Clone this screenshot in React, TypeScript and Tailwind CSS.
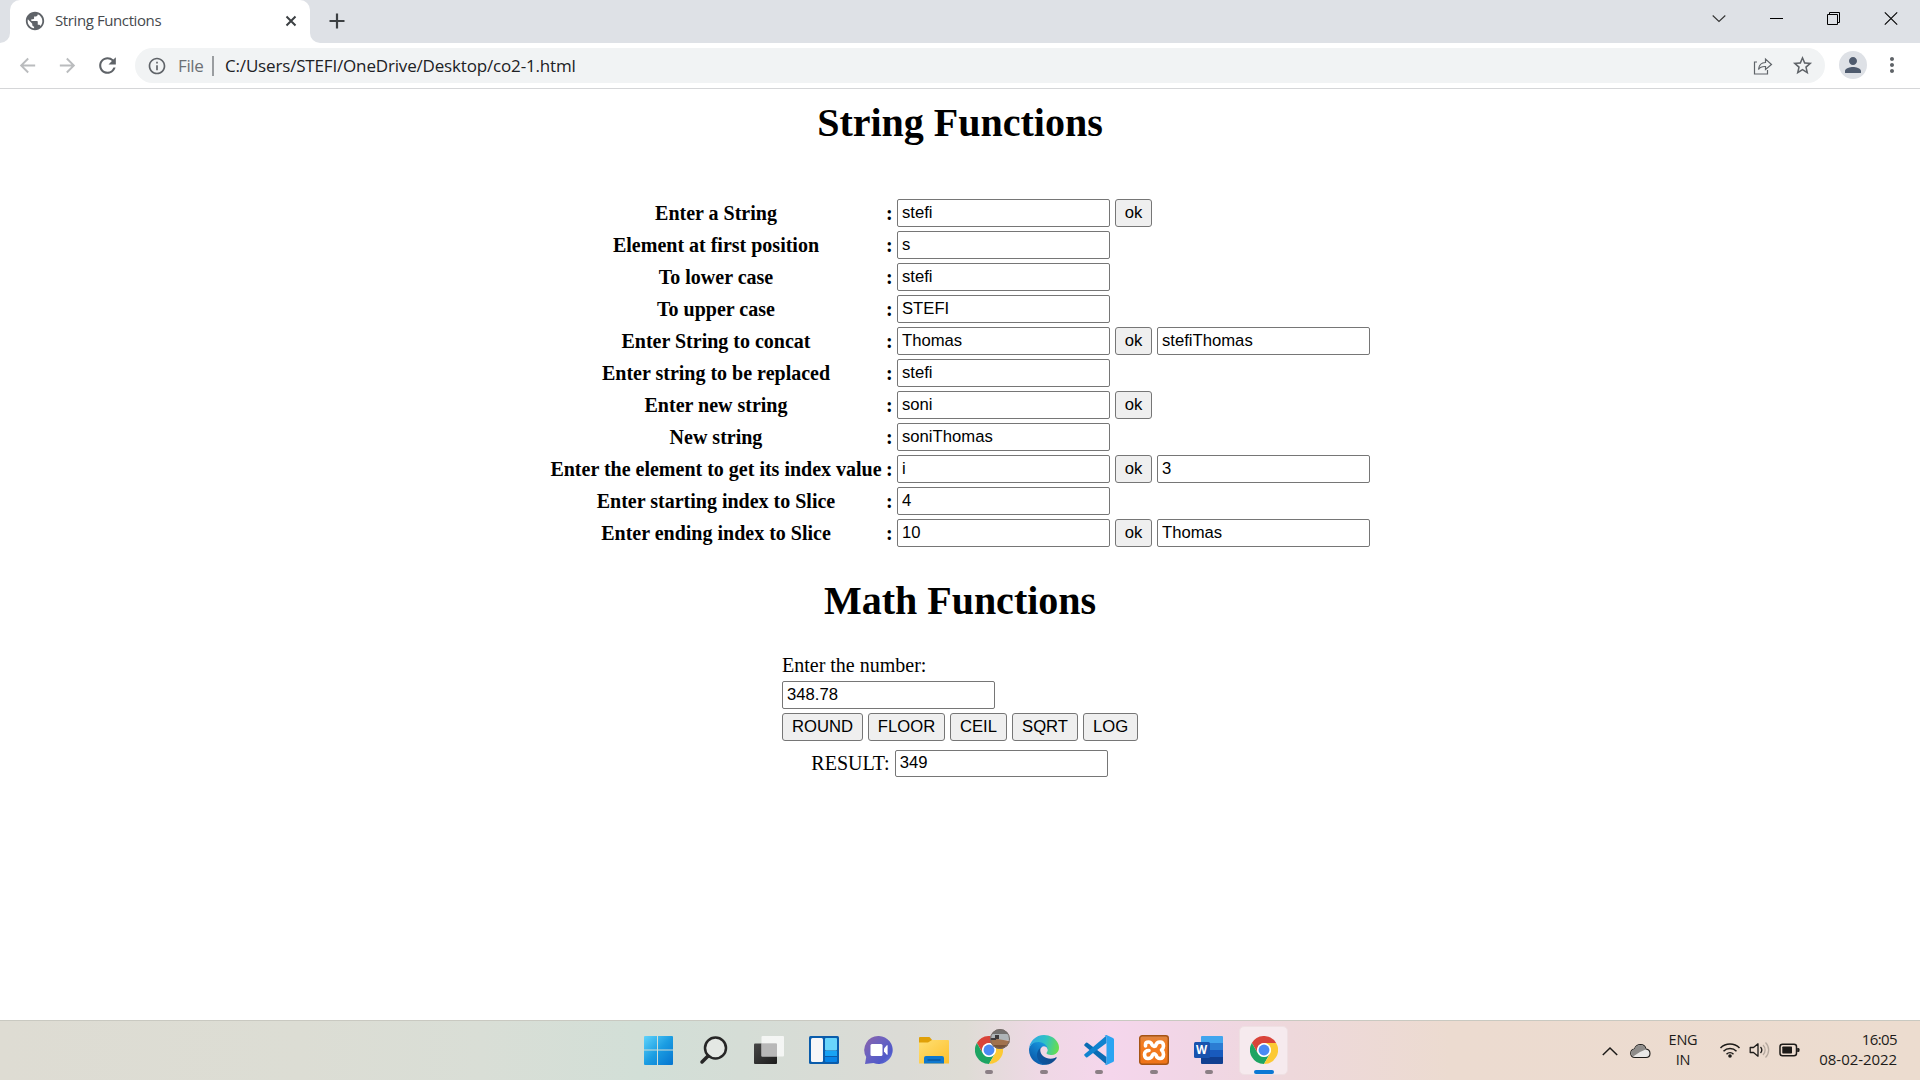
import React from "react";
import {
  MdArrowBack,
  MdArrowForward,
  MdMoreVert,
  MdOutlineInfo,
  MdPerson,
  MdPublic,
  MdRefresh,
  MdStarBorder,
} from "react-icons/md";

type Row = { label: string; value: string; ok?: boolean; result?: string };

const rows: Row[] = [
  { label: "Enter a String", value: "stefi", ok: true },
  { label: "Element at first position", value: "s" },
  { label: "To lower case", value: "stefi" },
  { label: "To upper case", value: "STEFI" },
  { label: "Enter String to concat", value: "Thomas", ok: true, result: "stefiThomas" },
  { label: "Enter string to be replaced", value: "stefi" },
  { label: "Enter new string", value: "soni", ok: true },
  { label: "New string", value: "soniThomas" },
  { label: "Enter the element to get its index value", value: "i", ok: true, result: "3" },
  { label: "Enter starting index to Slice", value: "4" },
  { label: "Enter ending index to Slice", value: "10", ok: true, result: "Thomas" },
];

function Field({ value, short }: { value: string; short?: boolean }) {
  return (
    <input
      type="text"
      defaultValue={value}
      className={`${short ? "h-[27px] pb-[2px]" : "h-7 pb-px"} w-[213px] shrink-0 rounded-[2px] border border-[#767676] bg-white pt-0 pr-1 pl-1 font-['Liberation_Sans',sans-serif] text-[16.67px] leading-5 text-black outline-none`}
    />
  );
}

function Push({ label, width }: { label: string; width: string }) {
  return (
    <button
      type="button"
      className={`${width} h-7 shrink-0 rounded-[3px] border border-[#767676] bg-[#efefef] pb-px text-center font-['Liberation_Sans',sans-serif] text-[16.67px] leading-[25px] text-black`}
    >
      {label}
    </button>
  );
}

function TabStrip() {
  return (
    <div className="flex h-[43px] bg-[#dee1e6]">
      <div className="flex w-[10px] items-end bg-white">
        <div className="h-full w-full rounded-br-[10px] bg-[#dee1e6]" />
      </div>
      <div className="bg-[#dee1e6]">
        <div className="flex h-full w-[300px] items-center rounded-t-[10px] bg-white pr-[11px] pl-[14px]">
          <MdPublic className="mb-px size-[22px] text-[#5f6368]" />
          <span className="mb-[3px] ml-[9px] text-[15px] leading-5 tracking-[-0.4px] whitespace-nowrap text-[#45494d]">
            String Functions
          </span>
          <svg className="mr-[2px] mb-px ml-auto h-3 w-3" viewBox="0 0 12 12" stroke="#3c4043" strokeWidth="2">
            <path d="m1.500 1.500 9 9M10.500 1.500l-9 9" />
          </svg>
        </div>
      </div>
      <div className="w-[10px] bg-white">
        <div className="h-full w-full rounded-bl-[10px] bg-[#dee1e6]" />
      </div>
      <svg className="mt-[13px] ml-[9px] h-4 w-4" viewBox="0 0 16 16" stroke="#3c4043" strokeWidth="2.200">
        <path d="M8 .5v15M.5 8h15" />
      </svg>
      <div className="ml-auto flex h-9 items-center text-black">
        <svg className="mr-[42px] h-4 w-4" viewBox="0 0 16 16" fill="none" stroke="#333" strokeWidth="1.1">
          <path d="M1.700 5.500 8 11.500 14.300 5.500" />
        </svg>
        <svg className="mr-[41px] h-4 w-4" viewBox="0 0 16 16" fill="none" stroke="currentColor">
          <path d="M1 8.500h13" />
        </svg>
        <svg className="mr-[41px] h-4 w-4" viewBox="0 0 16 16" fill="none" stroke="currentColor">
          <path d="M1.500 4.500h10v10h-10zM3.500 4.500v-2h10v10h-2" />
        </svg>
        <svg className="mr-[21px] h-4 w-4" viewBox="0 0 16 16" fill="none" stroke="currentColor" strokeWidth="1.1">
          <path d="m1.800 2.300 12.400 12.400M14.200 2.300 1.800 14.700" />
        </svg>
      </div>
    </div>
  );
}

function Toolbar() {
  return (
    <div className="flex h-[46px] items-start border-b border-[#d5d6d8] bg-white pt-[5px]">
      <div className="flex h-[35px] w-[135px] items-center pl-4 text-[#babcbe]">
        <MdArrowBack className="size-[23px]" />
        <MdArrowForward className="ml-[17px] size-[23px]" />
        <MdRefresh className="ml-4 size-[25px] text-[#5f6368]" />
      </div>
      <div className="flex h-[35px] w-[1690px] items-center rounded-full bg-[#f1f3f4] pr-[11px] pl-[12px]">
        <MdOutlineInfo className="size-5 text-[#5f6368]" />
        <span className="ml-[11px] w-[34px] text-[17px] leading-5 tracking-[-0.35px] text-[#6c7074]">File</span>
        <span className="h-5 w-[2px] bg-[#9a9da0]" />
        <span className="ml-[11px] text-[17px] leading-5 tracking-[-0.17px] whitespace-nowrap text-[#202124]">
          C:/Users/STEFI/OneDrive/Desktop/co2-1.html
        </span>
        <svg className="ml-auto h-5 w-5" viewBox="0 0 20 20" fill="none" stroke="#5f6368" strokeWidth="1.2">
          <path d="M4 6H1.500v12h13v-4" />
          <path d="M5.500 13.500C6 8.500 8.500 6.500 12.500 6.500V3L18.500 8.500 12.500 13.500V10.500C9 10.300 7 11 5.500 13.500Z" />
        </svg>
        <MdStarBorder className="ml-[18px] size-[23px] text-[#5f6368]" />
      </div>
      <div className="mt-[3px] ml-[14px] flex size-7 items-center justify-center rounded-full bg-[#dee1e6]">
        <MdPerson className="size-6 text-[#4f5b6e]" />
      </div>
      <MdMoreVert className="mt-[5px] ml-[13px] size-6 text-[#5f6368]" />
    </div>
  );
}

function Page() {
  return (
    <main className="h-[931px] bg-white pt-[11px] font-['Liberation_Serif',serif] text-black">
      <h1 className="text-center text-[40px] leading-[46px] font-bold">String Functions</h1>
      <div className="mt-[53px] ml-[550px] flex flex-col gap-1">
        {rows.map((row) => (
          <div key={row.label} className="flex h-7 items-center">
            <span className="w-[332px] text-center text-[20px] leading-[23px] font-bold whitespace-nowrap">
              {row.label}
            </span>
            <span className="w-[15px] pl-1 text-[20px] leading-[23px] font-bold">:</span>
            <Field value={row.value} />
            {row.ok && (
              <div className="ml-[5px]">
                <Push label="ok" width="w-[37px]" />
              </div>
            )}
            {row.result && (
              <div className="ml-[5px]">
                <Field value={row.result} />
              </div>
            )}
          </div>
        ))}
      </div>
      <h1 className="mt-[31px] text-center text-[40px] leading-[46px] font-bold">Math Functions</h1>
      <div className="mt-[30px] ml-[782px] w-[356px]">
        <p className="text-[20px] leading-[23px]">Enter the number:</p>
        <div className="mt-1 flex">
          <Field value="348.78" />
        </div>
        <div className="mt-1 flex gap-[5px]">
          <Push label="ROUND" width="w-[81px]" />
          <Push label="FLOOR" width="w-[77px]" />
          <Push label="CEIL" width="w-[57px]" />
          <Push label="SQRT" width="w-[66px]" />
          <Push label="LOG" width="w-[55px]" />
        </div>
        <div className="mt-[9px] flex items-center justify-center gap-[5px] pr-px">
          <span className="text-[20px] leading-[23px]">RESULT:</span>
          <Field value="349" short />
        </div>
      </div>
    </main>
  );
}

function WindowsLogo() {
  return (
    <svg className="mr-[2px] size-[30px]" viewBox="0 0 30 30">
      <defs>
        <linearGradient id="win" x1="0" y1="0" x2="1" y2="1">
          <stop offset="0" stopColor="#5fd3fb" />
          <stop offset=".5" stopColor="#1b9de2" />
          <stop offset="1" stopColor="#0574cf" />
        </linearGradient>
      </defs>
      <path
        fill="url(#win)"
        d="M2 1h12v13.500H1V2a1 1 0 0 1 1-1ZM15 1h14a1 1 0 0 1 1 1v12.500H15ZM1 15.500h13V30H2a1 1 0 0 1-1-1ZM15 15.500h15V29a1 1 0 0 1-1 1H15Z"
      />
    </svg>
  );
}

function SearchGlyph() {
  return (
    <svg className="mr-[2px] size-[30px]" viewBox="0 0 30 30" fill="none" stroke="#262626">
      <circle cx="17.500" cy="13" r="10.500" strokeWidth="2.500" fill="#e4e8e4" />
      <path d="M10 21 4 27" strokeWidth="3.500" strokeLinecap="round" />
    </svg>
  );
}

function TaskViewGlyph() {
  return (
    <svg className="size-[30px]" viewBox="0 0 30 30">
      <defs>
        <linearGradient id="tvDark" x1="0" y1="0" x2="1" y2="1">
          <stop offset="0" stopColor="#474747" />
          <stop offset="1" stopColor="#1c1c1c" />
        </linearGradient>
      </defs>
      <rect x="0" y="8.500" width="23" height="20.500" rx="1" fill="url(#tvDark)" />
      <rect x="7.500" y="1" width="22.500" height="20.500" rx="1" fill="#fff" opacity=".72" />
      <path d="M7.500 8.500H22a1 1 0 0 1 1 1v12H7.500Z" fill="#b8b8b8" />
    </svg>
  );
}

function WidgetsIcon() {
  return (
    <svg className="size-[30px]" viewBox="0 0 30 30">
      <rect x="0" y="1" width="30" height="28" rx="1.500" fill="#0a5cab" />
      <rect x="2" y="3" width="12" height="24" rx="1.500" fill="#f6f6f8" />
      <rect x="16" y="3" width="12" height="12.500" rx="1" fill="#69d5fc" />
      <rect x="16" y="16" width="12" height="5" fill="#18a3f4" />
      <path d="M16 22h12v4a1 1 0 0 1-1 1H17a1 1 0 0 1-1-1Z" fill="#0784e7" />
    </svg>
  );
}

function ChatIcon() {
  return (
    <svg className="size-[30px]" viewBox="0 0 30 30">
      <defs>
        <linearGradient id="chat" x1="0" y1="0" x2="1" y2="1">
          <stop offset="0" stopColor="#8c62a8" />
          <stop offset=".4" stopColor="#6c62c0" />
          <stop offset=".75" stopColor="#5059c9" />
          <stop offset="1" stopColor="#6b7de0" />
        </linearGradient>
      </defs>
      <path d="M15 1a14 14 0 1 1-5.500 27L1 29l1.200-7A14 14 0 0 1 15 1Z" fill="url(#chat)" />
      <rect x="6.500" y="9" width="12" height="12" rx="1.500" fill="#fff" />
      <path d="m20 13.500 2.800-3.200h.8v9.400h-.8L20 16.500Z" fill="#fff" />
    </svg>
  );
}

function ExplorerIcon() {
  return (
    <svg className="size-[30px]" viewBox="0 0 30 30">
      <defs>
        <linearGradient id="folder" x1="0" y1="0" x2="1" y2="1">
          <stop offset="0" stopColor="#ffdf73" />
          <stop offset="1" stopColor="#fdc02c" />
        </linearGradient>
      </defs>
      <path d="M0 3a1 1 0 0 1 1-1h9.500L13.500 5.500 9 9H0Z" fill="#e0a008" />
      <path d="M0 7.500h9L13 5h16a1 1 0 0 1 1 1v22.500H0Z" fill="url(#folder)" />
      <path d="M5 28.500V23a2 2 0 0 1 2-2h16a2 2 0 0 1 2 2v5.500Z" fill="#0f78ce" />
      <path d="M8.500 25h13" stroke="#084f93" strokeWidth="1.200" />
    </svg>
  );
}

function ChromeLogo() {
  return (
    <svg className="size-7" viewBox="0 0 48 48">
      <circle cx="24" cy="24" r="23" fill="#fff" />
      <path fill="#d9433a" d="M3.200 12A24 24 0 0 1 44.800 12H24a12 12 0 0 0-10.400 18Z" />
      <path fill="#1da462" d="M3.200 12A24 24 0 0 0 24 48l10.400-18a12 12 0 0 1-20.800 0Z" />
      <path fill="#fcc934" d="M44.800 12A24 24 0 0 1 24 48l10.400-18A12 12 0 0 0 24 12Z" />
      <circle cx="24" cy="24" r="11.500" fill="#fff" />
      <circle cx="24" cy="24" r="9.300" fill="#4a8af4" />
    </svg>
  );
}

function ProfilePhoto() {
  return (
    <svg className="absolute -top-[7px] left-[15px] size-5" viewBox="0 0 20 20">
      <defs>
        <clipPath id="face">
          <circle cx="10" cy="10" r="10" />
        </clipPath>
      </defs>
      <g clipPath="url(#face)">
        <path fill="#73706e" d="M0 0h20v6H0z" />
        <path fill="#aeb4b7" d="M0 5h20v6H0z" />
        <path fill="#a1724e" d="M0 11 7 10l13 2v8H0z" />
        <path fill="#3f3b3c" d="M5 6h4v4H5zM0 9h6v2H0z" />
        <path fill="#775238" d="M3 16h15v4H3z" />
      </g>
      <circle cx="10" cy="10" r="9.500" fill="none" stroke="#766c68" />
    </svg>
  );
}

function EdgeLogo() {
  return (
    <svg className="size-[30px]" viewBox="0 0 256 256">
      <defs>
        <linearGradient id="edgeA" x1="63" y1="177" x2="241" y2="177" gradientUnits="userSpaceOnUse">
          <stop offset="0" stopColor="#0c59a4" />
          <stop offset="1" stopColor="#114a8b" />
        </linearGradient>
        <linearGradient id="edgeB" x1="157" y1="75" x2="46" y2="220" gradientUnits="userSpaceOnUse">
          <stop offset="0" stopColor="#1b9de2" />
          <stop offset=".4" stopColor="#1384cf" />
          <stop offset="1" stopColor="#0c5fae" />
        </linearGradient>
        <linearGradient id="edgeC" x1="20" y1="60" x2="250" y2="120" gradientUnits="userSpaceOnUse">
          <stop offset="0" stopColor="#31a8e4" />
          <stop offset=".5" stopColor="#2fc2c5" />
          <stop offset="1" stopColor="#66dd50" />
        </linearGradient>
      </defs>
      <g transform="translate(-4.630 -4.920)">
        <path
          fill="url(#edgeA)"
          d="M235.680 195.460a93.730 93.730 0 0 1-10.540 4.710 101.870 101.870 0 0 1-35.900 6.460c-47.320 0-88.540-32.550-88.540-74.320A31.480 31.480 0 0 1 117.130 105c-42.800 1.800-53.800 46.400-53.800 72.530 0 73.880 68.090 81.370 82.760 81.370 7.910 0 19.840-2.300 27-4.560l1.310-.440a128.340 128.340 0 0 0 66.600-52.800 4 4 0 0 0-5.320-5.640Z"
        />
        <path
          fill="url(#edgeB)"
          d="M110.340 246.340A79.200 79.200 0 0 1 87.600 225 80.720 80.720 0 0 1 117.130 105c3.120-1.470 8.450-4.130 15.540-4a32.350 32.350 0 0 1 25.690 13 31.880 31.880 0 0 1 6.360 18.660c0-.210 24.460-79.600-80-79.600-43.900 0-80 41.660-80 78.210a130.150 130.150 0 0 0 12.110 56 128 128 0 0 0 156.380 67.110 75.550 75.550 0 0 1-62.780-8Z"
        />
        <path
          fill="url(#edgeC)"
          d="M156.940 153.780c-.810 1.050-3.300 2.500-3.300 5.660 0 2.610 1.700 5.120 4.720 7.230 14.380 10 41.490 8.680 41.560 8.680a59.560 59.560 0 0 0 30.270-8.350 61.380 61.380 0 0 0 30.430-52.880c.260-22.410-8-37.310-11.340-43.910C228.090 28.760 182.350 4.920 132.610 4.920a128 128 0 0 0-128 126.200c.480-36.540 36.800-66.050 80-66.050 3.500 0 23.460.340 42 10.070 16.340 8.580 24.900 18.940 30.850 29.210 6.180 10.670 7.280 24.150 7.280 29.520s-2.740 13.330-7.800 19.910Z"
        />
      </g>
    </svg>
  );
}

function CodeLogo() {
  return (
    <svg className="size-[30px]" viewBox="0 0 30 30">
      <path fill="#0a6cb4" d="M.4 9.400 2 7.700q.7-.5 1.400 0L22.500 22v7.500L.5 10.700q-.6-.6-.1-1.300Z" />
      <path fill="#1083cf" d="M.4 20.600 2 22.300q.7.500 1.400 0L22.500 8V.5L.5 19.300q-.6.600-.1 1.300Z" />
      <path fill="#2ba4f2" d="M22.500 0 29 3q1 .5 1 1.600v20.800q0 1.100-1 1.600l-6.500 3q-1.200.3-2-.5 2 .4 2-1.500V2q0-1.900-2-1.500.8-.8 2-.5Z" />
    </svg>
  );
}

function XamppLogo() {
  return (
    <svg className="size-[30px]" viewBox="0 0 30 30">
      <defs>
        <linearGradient id="xampp" x1="0" y1="0" x2="0" y2="1">
          <stop offset="0" stopColor="#d98748" />
          <stop offset=".25" stopColor="#f47d22" />
          <stop offset="1" stopColor="#ee7418" />
        </linearGradient>
      </defs>
      <rect x=".7" y=".7" width="28.600" height="28.600" rx="2.500" fill="url(#xampp)" stroke="#a65414" strokeWidth="1.400" />
      <path
        fill="none"
        stroke="#fff"
        strokeWidth="3.600"
        strokeLinecap="round"
        strokeLinejoin="round"
        d="M6.500 11V9.500Q6.500 7 9.500 7 12 7 12.800 9.500 14 12 16.500 11 17.500 7 21 7 24.500 7 24.500 11 24.500 13.500 22.500 15 24.500 16.500 24.500 19.500 24.500 23.500 21 23.500 18 23.500 17 20 15 17.500 13.500 20 12.500 23.500 9 23.500 5.500 23.500 5.500 19.500 5.500 15.500 10 15.500"
      />
    </svg>
  );
}

function WordLogo() {
  return (
    <div className="relative size-[30px]">
      <svg className="size-[30px]" viewBox="0 0 30 30">
        <path fill="#41a5ee" d="M7 2a1 1 0 0 1 1-1h20a1 1 0 0 1 1 1v6H7z" />
        <path fill="#2b7cd3" d="M7 8h22v7H7z" />
        <path fill="#185abd" d="M7 15h22v7H7z" />
        <path fill="#103f91" d="M7 22h22v6a1 1 0 0 1-1 1H8a1 1 0 0 1-1-1z" />
        <rect x="0" y="7" width="16" height="16" rx="1.500" fill="#1853ae" />
      </svg>
      <span className="absolute top-[7px] left-0 w-4 text-center font-['Open_Sans',sans-serif] text-[11.5px] leading-4 font-bold text-white">
        W
      </span>
    </div>
  );
}

function Slot({ children, running }: { children: React.ReactNode; running?: boolean }) {
  return (
    <div className="flex h-full w-[55px] flex-col items-center pt-[14px]">
      <div className="flex h-[30px] items-center">{children}</div>
      {running && <div className="mt-[5px] h-1 w-2 rounded-full bg-[#8b7f85]" />}
    </div>
  );
}

function Tray() {
  return (
    <div className="ml-auto flex h-full items-center pr-[23px] text-[#1d1b19]">
      <svg className="h-4 w-4" viewBox="0 0 16 16" fill="none" stroke="currentColor" strokeWidth="1.500">
        <path d="m.8 12 7.200-7 7.200 7" />
      </svg>
      <svg className="ml-[12px] h-4 w-[21px]" viewBox="0 0 21 16">
        <path d="M4.500 6Q6 1.500 10.500 1.500T16 6q4 .5 4 4.500 0 4-4 4H5q-4.300 0-4.300-4.200Q.7 6.500 4.500 6Z" fill="#e9e8e7" stroke="#1d1b19" strokeWidth="1.100" />
        <path d="M4.500 6Q6 2 10.500 2T15.600 6.500L10 9 3 13.500Q1.200 12.500 1.200 10 1.200 6.500 4.500 6Z" fill="#8e8c8a" />
      </svg>
      <div className="mb-px ml-[16px] w-[32px] text-center text-[14.500px] leading-5 tracking-[-0.2px]">
        <div>ENG</div>
        <div>IN</div>
      </div>
      <svg className="mb-px ml-[20px] h-5 w-[22px]" viewBox="0 0 22 20" fill="none" stroke="currentColor" strokeWidth="1.500">
        <path d="M1.500 8a13.400 13.400 0 0 1 19 0M4.500 11.200a9.200 9.200 0 0 1 13 0M7.500 14.200a5 5 0 0 1 7 0" />
        <circle cx="11" cy="16" r="1.800" fill="currentColor" stroke="none" />
      </svg>
      <svg className="mb-px ml-2 h-5 w-[22px]" viewBox="0 0 22 20" fill="none" stroke="currentColor" strokeWidth="1.300">
        <path d="M1.200 7.500H4.500L9 3.800v12.400L4.500 12.500H1.200Z" strokeLinejoin="round" />
        <path d="M11.500 7a4.500 4.500 0 0 1 0 6" />
        <path d="M14 5a7 7 0 0 1 0 10M16.500 2.500a10.500 10.500 0 0 1 0 15" stroke="#b5a99f" />
      </svg>
      <svg className="mb-px ml-[8px] h-5 w-[21px]" viewBox="0 0 21 20">
        <rect x="1" y="4.200" width="16.500" height="11.600" rx="2.500" fill="none" stroke="currentColor" strokeWidth="1.500" />
        <rect x="3.300" y="6.500" width="9.700" height="7" rx=".7" fill="currentColor" />
        <path d="M18.200 8h1a1.300 1.300 0 0 1 1.300 1.300v1.400a1.300 1.300 0 0 1-1.300 1.300h-1z" fill="currentColor" />
      </svg>
      <div className="mb-1 ml-[17px] w-[80px] text-right text-[15px] leading-5 tracking-[-0.06px] whitespace-nowrap">
        <div className="tracking-[-0.6px]">16:05</div>
        <div>08-02-2022</div>
      </div>
    </div>
  );
}

function Taskbar() {
  return (
    <footer className="flex h-[60px] border-t border-[#c9c9c1] bg-[linear-gradient(90deg,#dedcd3_0px,#dcddd4_300px,#d9ded6_480px,#d2dfd7_640px,#d5ddd6_740px,#dbdbd6_900px,#dedcd5_965px,#efd8e5_1040px,#f5d6ec_1110px,#f1d6e6_1190px,#eed8db_1290px,#ecdbd0_1450px,#ecdccf_1920px)]">
      <div className="ml-[631px] flex h-full">
        <Slot><WindowsLogo /></Slot>
        <Slot><SearchGlyph /></Slot>
        <Slot><TaskViewGlyph /></Slot>
        <Slot><WidgetsIcon /></Slot>
        <Slot><ChatIcon /></Slot>
        <Slot><ExplorerIcon /></Slot>
        <Slot running>
          <div className="relative">
            <ChromeLogo />
            <ProfilePhoto />
          </div>
        </Slot>
        <Slot running><EdgeLogo /></Slot>
        <Slot running><CodeLogo /></Slot>
        <Slot running><XamppLogo /></Slot>
        <Slot running><WordLogo /></Slot>
        <div className="mt-[5px] ml-[3px] flex h-[49px] w-[49px] flex-col items-center rounded-[5px] border border-[#efe0e3] bg-[#f6eaee] pt-[9px]">
          <ChromeLogo />
          <div className="mt-[6px] h-1 w-5 rounded-full bg-[#0a78d4]" />
        </div>
      </div>
      <Tray />
    </footer>
  );
}

export default function App() {
  return (
    <div className="flex h-[1080px] w-[1920px] flex-col overflow-hidden bg-white font-['Open_Sans','Noto_Sans',sans-serif]">
      <TabStrip />
      <Toolbar />
      <Page />
      <Taskbar />
    </div>
  );
}
